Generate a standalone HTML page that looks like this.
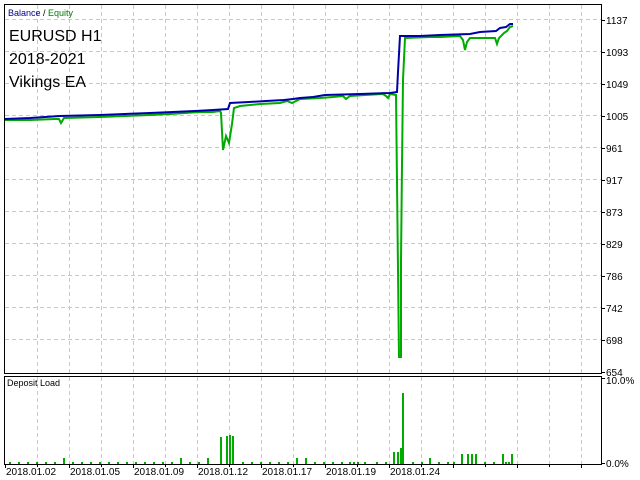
<!DOCTYPE html>
<html><head><meta charset="utf-8"><style>
body{margin:0;width:640px;height:480px;background:#fff;overflow:hidden;font-family:"Liberation Sans",sans-serif}
svg{display:block}
</style></head><body>
<svg width="640" height="480" xmlns="http://www.w3.org/2000/svg" font-family="Liberation Sans, sans-serif">
<rect width="640" height="480" fill="#fff"/>
<g stroke="#c8c8c8" stroke-dasharray="4,3" stroke-width="1">
<path d="M5 19.5H601M5 51.5H601M5 83.5H601M5 115.5H601M5 147.5H601M5 179.5H601M5 211.5H601M5 243.5H601M5 275.5H601M5 307.5H601M5 339.5H601"/>
<path d="M37.5 5V373M69.5 5V373M101.5 5V373M133.5 5V373M165.5 5V373M197.5 5V373M229.5 5V373M261.5 5V373M293.5 5V373M325.5 5V373M357.5 5V373M389.5 5V373M421.5 5V373M453.5 5V373M485.5 5V373M517.5 5V373M549.5 5V373M581.5 5V373"/>
<path d="M37.5 377V464M69.5 377V464M101.5 377V464M133.5 377V464M165.5 377V464M197.5 377V464M229.5 377V464M261.5 377V464M293.5 377V464M325.5 377V464M357.5 377V464M389.5 377V464M421.5 377V464M453.5 377V464M485.5 377V464M517.5 377V464M549.5 377V464M581.5 377V464"/>
</g>
<rect x="4.5" y="4.5" width="597" height="369" fill="none" stroke="#000"/>
<rect x="4.5" y="376.5" width="597" height="88" fill="none" stroke="#000"/>
<g stroke="#000"><path d="M601 20.5h4M601 52.5h4M601 84.5h4M601 116.5h4M601 148.5h4M601 180.5h4M601 212.5h4M601 244.5h4M601 276.5h4M601 308.5h4M601 340.5h4M601 372.5h4M601 378.5h4M601 463.5h4"/>
<path d="M5.5 464v4M37.5 464v3M69.5 464v4M101.5 464v3M133.5 464v4M165.5 464v3M197.5 464v4M229.5 464v3M261.5 464v4M293.5 464v3M325.5 464v4M357.5 464v3M389.5 464v4M421.5 464v3M453.5 464v4M485.5 464v3M517.5 464v4M549.5 464v3M581.5 464v4"/></g>
<g font-size="10" fill="#000">
<text x="606" y="24">1137</text><text x="606" y="56">1093</text><text x="606" y="88">1049</text><text x="606" y="120">1005</text><text x="606" y="152">961</text><text x="606" y="184">917</text><text x="606" y="216">873</text><text x="606" y="248">829</text><text x="606" y="280">786</text><text x="606" y="312">742</text><text x="606" y="344">698</text><text x="606" y="376">654</text>
<text x="606" y="384">10.0%</text><text x="606" y="467">0.0%</text>
<text x="6" y="475">2018.01.02</text><text x="70" y="475">2018.01.05</text><text x="134" y="475">2018.01.09</text><text x="198" y="475">2018.01.12</text><text x="262" y="475">2018.01.17</text><text x="326" y="475">2018.01.19</text><text x="390" y="475">2018.01.24</text>
<text x="7" y="386" font-size="9">Deposit Load</text>
</g>
<text x="8" y="16" font-size="9"><tspan fill="#00008b">Balance</tspan><tspan fill="#000"> / </tspan><tspan fill="#008000">Equity</tspan></text>
<g font-size="16" fill="#000"><text x="9" y="41">EURUSD H1</text><text x="9" y="64">2018-2021</text><text x="9" y="87">Vikings EA</text></g>
<polyline fill="none" stroke="#00aa00" stroke-width="2" points="5,120 30,120 55,119 59,119 61,123 64,118 100,117 150,115 170,114 185,113 200,112 213,112 220,111 221,113 223,150 226,136 229,143 232,124 234,108 240,106 260,104 280,103 287,101 292,103 300,99 320,98 333,97 343,96 346,99 350,96 365,95 383,94 386,96 388,98 390,94 396,95 397,182 398,270 399,357 401,357 401,261 402,165 403,80 405,38 430,37 440,37 460,36 463,40 465,50 467,42 470,38 495,38 497,44 499,38 504,33 507,31 510,27 513,26"/>
<polyline fill="none" stroke="#0000aa" stroke-width="2" points="5,119 30,118 60,116 100,115 150,113 195,111 213,110 228,109 230,103 249,102 266,101 284,100 293,99 300,98 313,97 325,95 360,94 390,93 397,92 398,72 400,36 420,36 440,35 470,34 480,32 496,31 500,28 506,27 510,24 513,24"/>
<g fill="#00aa00">
<rect x="9" y="462" width="2" height="2"/><rect x="18" y="462" width="2" height="2"/><rect x="27" y="462" width="2" height="2"/><rect x="36" y="462" width="2" height="2"/><rect x="45" y="462" width="2" height="2"/><rect x="54" y="462" width="2" height="2"/><rect x="63" y="458" width="2" height="6"/><rect x="72" y="462" width="2" height="2"/><rect x="81" y="462" width="2" height="2"/><rect x="90" y="462" width="2" height="2"/><rect x="99" y="462" width="2" height="2"/><rect x="108" y="462" width="2" height="2"/><rect x="117" y="462" width="2" height="2"/><rect x="126" y="462" width="2" height="2"/><rect x="135" y="462" width="2" height="2"/><rect x="144" y="462" width="2" height="2"/><rect x="153" y="462" width="2" height="2"/><rect x="162" y="462" width="2" height="2"/><rect x="171" y="462" width="2" height="2"/><rect x="180" y="458" width="2" height="6"/><rect x="189" y="462" width="2" height="2"/><rect x="198" y="462" width="2" height="2"/><rect x="207" y="458" width="2" height="6"/>
<rect x="220" y="437" width="2" height="27"/><rect x="226" y="436" width="2" height="28"/><rect x="229" y="435" width="2" height="29"/><rect x="232" y="436" width="2" height="28"/>
<rect x="242" y="462" width="2" height="2"/><rect x="251" y="462" width="2" height="2"/><rect x="260" y="462" width="2" height="2"/><rect x="269" y="462" width="2" height="2"/><rect x="278" y="462" width="2" height="2"/><rect x="287" y="462" width="2" height="2"/><rect x="296" y="458" width="2" height="6"/><rect x="305" y="458" width="2" height="6"/><rect x="314" y="462" width="2" height="2"/><rect x="323" y="462" width="2" height="2"/><rect x="332" y="462" width="2" height="2"/><rect x="341" y="462" width="2" height="2"/><rect x="349" y="462" width="2" height="2"/><rect x="353" y="462" width="2" height="2"/><rect x="357" y="462" width="2" height="2"/><rect x="364" y="462" width="2" height="2"/><rect x="376" y="462" width="2" height="2"/><rect x="385" y="462" width="2" height="2"/>
<rect x="393" y="452" width="2" height="12"/><rect x="397" y="452" width="2" height="12"/><rect x="400" y="448" width="2" height="16"/><rect x="402" y="393" width="2" height="71"/>
<rect x="412" y="462" width="2" height="2"/><rect x="421" y="462" width="2" height="2"/><rect x="429" y="458" width="2" height="6"/><rect x="438" y="462" width="2" height="2"/><rect x="447" y="462" width="2" height="2"/><rect x="453" y="462" width="2" height="2"/><rect x="461" y="454" width="2" height="10"/><rect x="467" y="454" width="2" height="10"/><rect x="471" y="454" width="2" height="10"/><rect x="475" y="454" width="2" height="10"/><rect x="484" y="462" width="2" height="2"/><rect x="493" y="462" width="2" height="2"/><rect x="502" y="454" width="2" height="10"/><rect x="505" y="462" width="2" height="2"/><rect x="508" y="462" width="2" height="2"/><rect x="511" y="454" width="2" height="10"/>
</g>
</svg>
</body></html>
